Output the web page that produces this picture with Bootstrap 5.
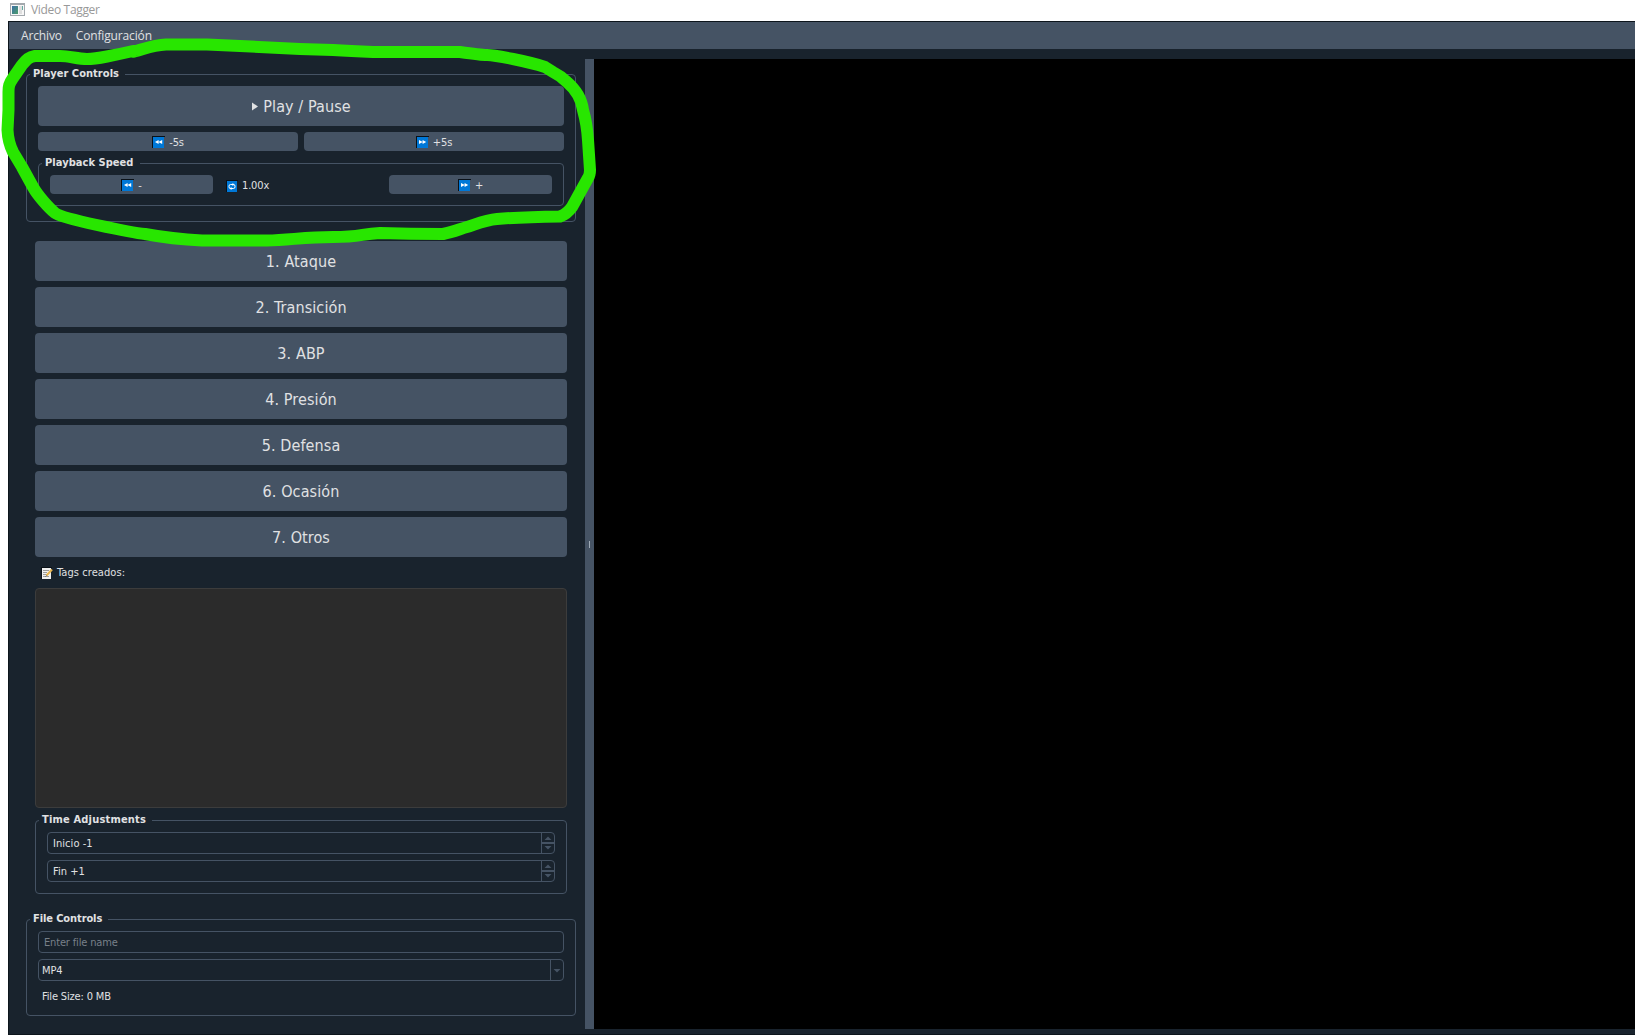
<!DOCTYPE html>
<html lang="es">
<head>
<meta charset="utf-8">
<meta name="viewport" content="width=device-width, initial-scale=1">
<title>Video Tagger</title>
<link href="https://cdn.jsdelivr.net/npm/bootstrap@5.3.0/dist/css/bootstrap.min.css" rel="stylesheet">
<style>
  :root { --ink: #e0e1e3; --panel: #19232d; --slate: #455364; }
  body { height: 1035px; overflow: hidden; background: #fff; color: var(--ink);
         font: 11px/14px "DejaVu Sans Condensed", "DejaVu Sans", sans-serif; letter-spacing: -.16px; }
  .titlebar { height: 21px; padding: 0 0 3px 10px; gap: 6px; color: #999; font: 12px/18px "Open Sans", sans-serif; letter-spacing: -.33px; }
  .titlebar span { padding-top: 2px; }
  .app-window { margin-left: 8px; border: 1px solid #0d151c; border-right: 0; background: var(--panel); }
  .menubar { height: 27px; padding: 0 12px 0 12px; gap: 14px; background: var(--slate); font: 12px/28px "Open Sans", sans-serif; letter-spacing: -.15px; }
  .menubar .nav-link { color: var(--ink); padding: 0; }
  .workspace { padding: 10px 0 5px; }
  .side { width: 576px; padding: 9px 9px 0 17px; }
  .splitter { width: 9px; background: var(--slate); }
  .splitter i { width: 1px; height: 7px; background: #9da9b5; }
  .group { border: 1px solid var(--slate); border-radius: 4px; padding: 5px 11px 0; min-width: 0; }
  .group > legend { float: none; width: auto; margin: 0 0 0 -8px; padding: 0 6px 0 3px; height: 13px;
                    font: bold 11px/12px "DejaVu Sans Condensed", "DejaVu Sans", sans-serif; letter-spacing: .05px; color: var(--ink); }
  .btn { --bs-btn-bg: var(--slate); --bs-btn-color: var(--ink); --bs-btn-hover-bg: #54687a; --bs-btn-hover-color: var(--ink);
         border: 0; border-radius: 4px; padding: 0; display: flex; align-items: center; justify-content: center; letter-spacing: inherit; }
  .btn-tall { height: 40px; font-size: 16px; line-height: 38px; letter-spacing: .1px; padding-top: 2px; }
  .btn-short { height: 19px; font-size: 11px; line-height: 17px; gap: 4px; padding-top: 2px; }
  .btn-short svg { margin-top: -1px; }
  .stack { gap: 6px; }
  .tags-list { height: 220px; background: #2b2b2b; border: 1px solid #3c3c3c; border-radius: 4px; }
  .field { height: 22px; border: 1px solid var(--slate); border-radius: 4px; overflow: hidden; }
  .field input { min-width: 0; min-height: 0; background: transparent; border: 0; border-radius: 0; box-shadow: none; outline: 0; padding: 2px 5px 0;
                 color: var(--ink); font: inherit; letter-spacing: inherit; }
  .field input::placeholder { color: #788089; opacity: 1; }
  .field .arrows { width: 13px; border-left: 1px solid var(--slate); }
  .field .arrows svg { display: block; }
  .marker { left: 0; top: 0; pointer-events: none; }
  svg { flex: none; }
</style>
<script src="https://cdn.jsdelivr.net/npm/bootstrap@5.3.0/dist/js/bootstrap.bundle.min.js"></script>
</head>
<body class="d-flex flex-column position-relative">
<svg width="0" height="0" class="position-absolute">
  <symbol id="rewind" viewBox="0 0 13 12"><path fill="#0a1118" d="M0 0h13v1H1v11H0z"/><path fill="#0078d7" d="M1 1h11v11H1z"/><path fill="#fff" d="M6.600 4v4L3 6zM10.200 4v4L6.400 6z"/></symbol>
  <symbol id="forward" viewBox="0 0 13 12"><path fill="#0a1118" d="M0 0h13v1H1v11H0z"/><path fill="#0078d7" d="M1 1h11v11H1z"/><path fill="#fff" d="M3 4v4l3.800-2zM6.600 4v4l3.600-2z"/></symbol>
  <symbol id="repeat" viewBox="0 0 12 12"><path fill="#0a1118" d="M0 0h12v1H1v11H0z"/><path fill="#0078d7" d="M1 1h10v11H1z"/><rect x="3" y="4.500" width="6" height="4" rx="1.600" fill="none" stroke="#fff"/><path fill="#fff" d="M6.500 3 8.500 4.500 6.500 6zM5.500 7 3.500 8.500l2 1.500z"/></symbol>
  <symbol id="spin" viewBox="0 0 12 20"><path fill="#455364" d="M0 9h12v2H0zM2.500 7h7L6 3.500zM2.500 13h7L6 16.500z"/></symbol>
</svg>

<header class="titlebar d-flex align-items-center">
  <svg width="15" height="13" viewBox="0 0 15 13"><defs><linearGradient id="pane" x2="1" y2="1"><stop stop-color="#3b6fa5"/><stop offset="1" stop-color="#4c9d6c"/></linearGradient></defs><path fill="#a3a8ad" d="M0 0h15v13H0z"/><path fill="#f7f7f7" d="M1 2h13v10H1z"/><path fill="url(#pane)" d="M2 3h6v8H2z"/><path fill="#dedede" d="M9 3h3v8H9z"/><path fill="#62aaa0" d="M12 3h1v4h-1z"/></svg>
  <span>Video Tagger</span>
</header>

<div class="app-window d-flex flex-column flex-grow-1">
  <nav class="menubar nav">
    <a class="nav-link" href="#">Archivo</a>
    <a class="nav-link" href="#">Configuración</a>
  </nav>

  <main class="workspace d-flex flex-grow-1">
    <aside class="side d-flex flex-column">
      <fieldset class="group" style="height:154px">
        <legend>Player Controls</legend>
        <div class="stack d-flex flex-column">
          <button class="btn btn-tall" type="button">
            <svg width="8" height="10" viewBox="0 0 8 10" class="me-1"><path fill="#e0e1e3" d="M1 .5v8l6-4z"/></svg>Play / Pause
          </button>
          <div class="stack d-flex">
            <button class="btn btn-short flex-fill w-50" type="button"><svg width="13" height="12"><use href="#rewind"/></svg>-5s</button>
            <button class="btn btn-short flex-fill w-50" type="button"><svg width="13" height="12"><use href="#forward"/></svg>+5s</button>
          </div>
          <fieldset class="group" style="height:49px">
            <legend>Playback Speed</legend>
            <div class="d-flex justify-content-between align-items-center">
              <button class="btn btn-short" style="width:163px" type="button"><svg width="13" height="12"><use href="#rewind"/></svg>-</button>
              <span class="d-flex align-items-center flex-grow-1" style="gap:4px;padding:2px 0 0 13px"><svg width="12" height="12"><use href="#repeat"/></svg>1.00x</span>
              <button class="btn btn-short" style="width:163px" type="button"><svg width="13" height="12"><use href="#forward"/></svg>+</button>
            </div>
          </fieldset>
        </div>
      </fieldset>

      <section class="stack d-flex flex-column" style="padding:19px 9px 0">
        <button class="btn btn-tall" type="button">1. Ataque</button>
        <button class="btn btn-tall" type="button">2. Transición</button>
        <button class="btn btn-tall" type="button">3. ABP</button>
        <button class="btn btn-tall" type="button">4. Presión</button>
        <button class="btn btn-tall" type="button">5. Defensa</button>
        <button class="btn btn-tall" type="button">6. Ocasión</button>
        <button class="btn btn-tall" type="button">7. Otros</button>
      </section>

      <section class="d-flex flex-column" style="padding:0 9px">
        <div class="d-flex align-items-center" style="height:31px;gap:4px;padding:1px 0 0 6px;letter-spacing:.08px">
          <svg width="12" height="12" viewBox="0 0 12 12"><path fill="#0a1118" d="M0 0h11v1H1v11H0z"/><path fill="#efefef" d="M1 1h9v11H1z"/><path stroke="#9a9a9a" d="M2 3.500h6M2 5.500h4M2 7.500h4M2 9.500h6"/><path stroke="#e9b54d" stroke-width="2" d="M5.500 8.500 11 2.500"/><path stroke="#555" d="m4.500 9.500 1-1"/></svg>
          Tags creados:
        </div>
        <div class="tags-list"></div>
        <fieldset class="group" style="height:80px;margin-top:6px">
          <legend style="letter-spacing:.18px">Time Adjustments</legend>
          <div class="stack d-flex flex-column">
            <div class="field d-flex"><input class="form-control" style="letter-spacing:.05px" value="Inicio -1" aria-label="Inicio"><span class="arrows"><svg width="12" height="20"><use href="#spin"/></svg></span></div>
            <div class="field d-flex"><input class="form-control" style="letter-spacing:.05px" value="Fin +1" aria-label="Fin"><span class="arrows"><svg width="12" height="20"><use href="#spin"/></svg></span></div>
          </div>
        </fieldset>
      </section>

      <fieldset class="group" style="height:103px;margin-top:19px">
        <legend style="letter-spacing:-.1px">File Controls</legend>
        <div class="stack d-flex flex-column">
          <div class="field d-flex"><input class="form-control" placeholder="Enter file name" aria-label="File name"></div>
          <div class="field d-flex"><input class="form-control" style="padding-left:3px" value="MP4" aria-label="Format" readonly><span class="arrows"><svg width="12" height="20" viewBox="0 0 12 20"><path fill="#455364" d="M2.500 9h7L6 12.500z"/></svg></span></div>
          <span style="padding:3px 0 0 4px">File Size: 0 MB</span>
        </div>
      </fieldset>
    </aside>
    <div class="splitter d-flex align-items-center justify-content-center"><i></i></div>
    <div class="flex-grow-1" style="background:#000"></div>
  </main>
</div>

<svg class="marker position-absolute" width="620" height="260" viewBox="0 0 620 260" fill="none">
  <path stroke="#28e600" stroke-width="12" stroke-linejoin="round" stroke-linecap="round" d="M87 59C77 59 70 56 60 56H35C29 57 27 59 22 65L13 78C9 84 8.500 86 8.500 92V110L7.500 130C8 141 10 146 13 152L22 167 33 187C38 196 49 208 55 213Q60 217 97 225T145 234Q172 239 202 240.500H267C290 240 305 237 333 237S360 234 380 233Q410 234 443 234C453 232 460 229 467 227S485 220 497 219 527 217 560 216.500Q567 214 572 207L588 178Q590 175 590 170L588 140Q587 124 583 110 582 102 578 95 574 88 567 82 561 76 553 72L545 67Q533 63 513 59T487 55 460 52H373Q350 51 333 50L300 49 240 46 207 44.500H166Q156 45 143 49T133 51Q120 54 107 56.500T87 59Z"/>
</svg>
</body>
</html>
